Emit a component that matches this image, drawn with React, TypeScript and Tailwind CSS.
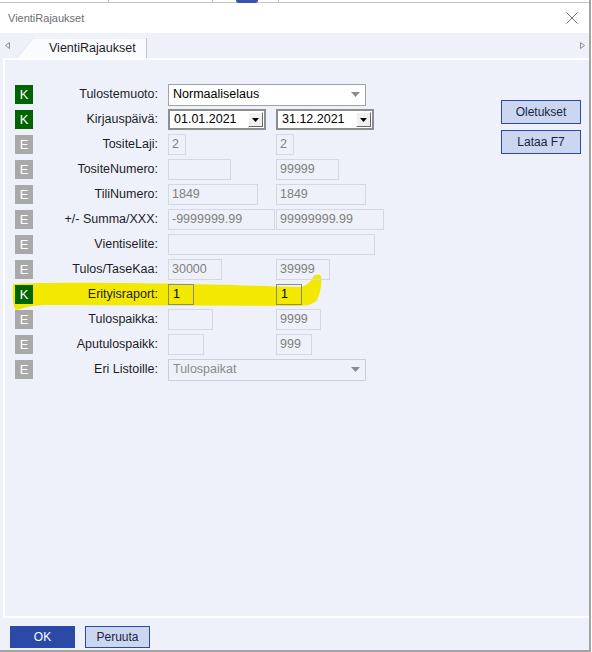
const rows: { k: boolean; label: string; a: any; b?: any }[] = [
  { k: true, label: 'Tulostemuoto:', a: { t: 'sel', w: 198, v: 'Normaaliselaus' } },
  { k: true, label: 'Kirjauspäivä:', a: { t: 'date', v: '01.01.2021' }, b: { t: 'date', v: '31.12.2021' } },
  { k: false, label: 'TositeLaji:', a: { t: 'dis', w: 18, v: '2' }, b: { t: 'dis', w: 18, v: '2' } },
  { k: false, label: 'TositeNumero:', a: { t: 'dis', w: 63, v: '' }, b: { t: 'dis', w: 63, v: '99999' } },
  { k: false, label: 'TiliNumero:', a: { t: 'dis', w: 90, v: '1849' }, b: { t: 'dis', w: 90, v: '1849' } },
  { k: false, label: '+/- Summa/XXX:', a: { t: 'dis', w: 107, v: '-9999999.99' }, b: { t: 'dis', w: 108, v: '99999999.99' } },
  { k: false, label: 'Vientiselite:', a: { t: 'dis', w: 207, v: '' } },
  { k: false, label: 'Tulos/TaseKaa:', a: { t: 'dis', w: 54, v: '30000' }, b: { t: 'dis', w: 54, v: '39999' } },
  { k: true, label: 'Erityisraport:', a: { t: 'hl', w: 26, v: '1' }, b: { t: 'hl', w: 26, v: '1' } },
  { k: false, label: 'Tulospaikka:', a: { t: 'dis', w: 45, v: '' }, b: { t: 'dis', w: 45, v: '9999' } },
  { k: false, label: 'Aputulospaikk:', a: { t: 'dis', w: 36, v: '' }, b: { t: 'dis', w: 36, v: '999' } },
  { k: false, label: 'Eri Listoille:', a: { t: 'dsel', w: 198, v: 'Tulospaikat' } },
]

const Arrow = ({ color }: { color: string }) => (
  <svg width="9" height="5" viewBox="0 0 9 5">
    <path d="M0 0 H9 L4.5 5 Z" fill={color} />
  </svg>
)

const Field = ({ f }: { f: any }) => {
  if (f.t === 'sel' || f.t === 'dsel') {
    const dis = f.t === 'dsel'
    return (
      <div
        style={{ width: f.w }}
        className={
          dis
            ? 'flex h-[22px] items-center justify-between border border-[#c9cfdc] pl-[4px] pr-[5px] text-[#8a8a8a]'
            : 'flex h-[22px] items-center justify-between border border-[#9ba1ad] bg-white pl-[4px] pr-[5px] text-black'
        }
      >
        <span>{f.v}</span>
        <Arrow color={dis ? '#8c8c8c' : '#8c8c8c'} />
      </div>
    )
  }
  if (f.t === 'date') {
    return (
      <div className="flex h-[21px] w-[98px] items-center justify-between border-2 border-[#8e8e8e] bg-white pl-[4px] pr-[1px] text-black">
        <span>{f.v}</span>
        <div className="flex h-[15px] w-[15px] items-center justify-center border border-t-white border-l-white border-r-[#6a6a6a] border-b-[#6a6a6a] bg-[#f0f0f0]">
          <svg width="7" height="4" viewBox="0 0 7 4">
            <path d="M0 0 H7 L3.5 4 Z" fill="#000" />
          </svg>
        </div>
      </div>
    )
  }
  if (f.t === 'hl') {
    return (
      <div style={{ width: f.w }} className="flex h-[21px] items-center border border-[#8a8a8a] pl-[4px] text-black">
        {f.v}
      </div>
    )
  }
  return (
    <div style={{ width: f.w }} className="flex h-[21px] items-center border border-[#d3d8e3] pl-[3px] text-[#808080]">
      {f.v}
    </div>
  )
}

export default function App() {
  return (
    <div className="flex h-[652px] w-[591px] flex-col border-r-2 border-b-2 border-[#a3a3a3] bg-[#eef1f9] font-['Liberation_Sans',Arial,sans-serif] text-[12.5px] text-[#1c1c28]">
      {/* strip of the window behind */}
      <div className="relative h-[3px] border-b border-[#c4c4c4] bg-white">
        <div className="absolute left-[108px] top-0 h-[3px] w-px bg-[#c4c4c4]" />
        <div className="absolute left-[212px] top-0 h-[3px] w-px bg-[#c4c4c4]" />
        <div className="absolute left-[278px] top-0 h-[3px] w-px bg-[#c4c4c4]" />
        <div className="absolute left-[236px] top-0 h-[3px] w-[22px] rounded-b bg-[#3a4fa8]" />
      </div>

      {/* title bar */}
      <div className="flex h-[30px] items-center justify-between bg-white pl-[8px] pr-[11px]">
        <span className="text-[11px] text-[#6e6e6e]">VientiRajaukset</span>
        <svg width="12" height="12" viewBox="0 0 12 12">
          <path d="M0.5 0.5 L11.5 11.5 M11.5 0.5 L0.5 11.5" stroke="#707070" strokeWidth="1" />
        </svg>
      </div>

      {/* tab strip */}
      <div className="flex h-[25px] items-end">
        <div className="flex h-full w-[17px] items-center pl-[5px]">
          <svg width="5" height="7" viewBox="0 0 5 7">
            <path d="M4.5 0.5 L0.5 3.5 L4.5 6.5 Z" fill="none" stroke="#8c8c8c" />
          </svg>
        </div>
        <div className="relative flex h-[20px] w-[130px] items-center pl-[32px]">
          <svg className="absolute inset-0" width="130" height="20" viewBox="0 0 130 20">
            <path d="M0 20 L16 0 H129 V20 Z" fill="#fafbfe" />
            <path d="M0 20 L16 0 H129" fill="none" stroke="#e3e6ee" />
            <path d="M129.5 0 V20" stroke="#c4c4c4" />
          </svg>
          <span className="relative">VientiRajaukset</span>
        </div>
        <div className="flex h-full flex-1 items-center justify-end pr-[4px]">
          <svg width="5" height="7" viewBox="0 0 5 7">
            <path d="M0.5 0.5 L4.5 3.5 L0.5 6.5 Z" fill="none" stroke="#8c8c8c" />
          </svg>
        </div>
      </div>

      {/* panel */}
      <div className="relative ml-[3px] flex h-[560px] border-t-2 border-l-2 border-b-2 border-white">
        <svg className="pointer-events-none absolute inset-0" width="584" height="556">
          <path
            d="M8 224 C60 221 200 224 295 227 C301 226 306 222 308 217 C311 214 314 214 316 216 C317 222 316 232 312 240 C308 245 300 246 290 246 L40 245 C28 245 18 248 11 250 C8 247 7 237 8 224 Z"
            fill="#f3e900"
          />
        </svg>

        <div className="relative flex flex-1 flex-col pt-[22px] pl-[10px]">
          {rows.map((r) => (
            <div key={r.label} className="flex h-[25px] items-center">
              <div
                className={
                  r.k
                    ? 'flex h-[19px] w-[18px] items-center justify-center bg-[#006400] text-[13px] text-white'
                    : 'flex h-[19px] w-[18px] items-center justify-center bg-[#a9a9a9] text-[13px] text-white'
                }
              >
                {r.k ? 'K' : 'E'}
              </div>
              <div className="w-[125px] text-right">{r.label}</div>
              <div className="ml-[10px] w-[108px]">
                <Field f={r.a} />
              </div>
              {r.b && <Field f={r.b} />}
            </div>
          ))}
        </div>

        <div className="relative flex flex-col gap-[6px] pt-[40px] pr-[8px]">
          <button className="h-[24px] w-[80px] border border-[#2b4aa6] bg-[#cbd7f1] text-[12px] text-[#1c2340]">Oletukset</button>
          <button className="h-[24px] w-[80px] border border-[#2b4aa6] bg-[#cbd7f1] text-[12px] text-[#1c2340]">Lataa F7</button>
        </div>
      </div>

      {/* bottom buttons */}
      <div className="flex flex-1 items-start gap-[10px] pt-[8px] pl-[10px]">
        <button className="h-[22px] w-[65px] bg-[#2b4aa8] text-[12px] text-white">OK</button>
        <button className="h-[22px] w-[65px] border border-[#2b4aa6] bg-[#cbd7f1] text-[12px] text-[#1c2340]">Peruuta</button>
      </div>
    </div>
  )
}
